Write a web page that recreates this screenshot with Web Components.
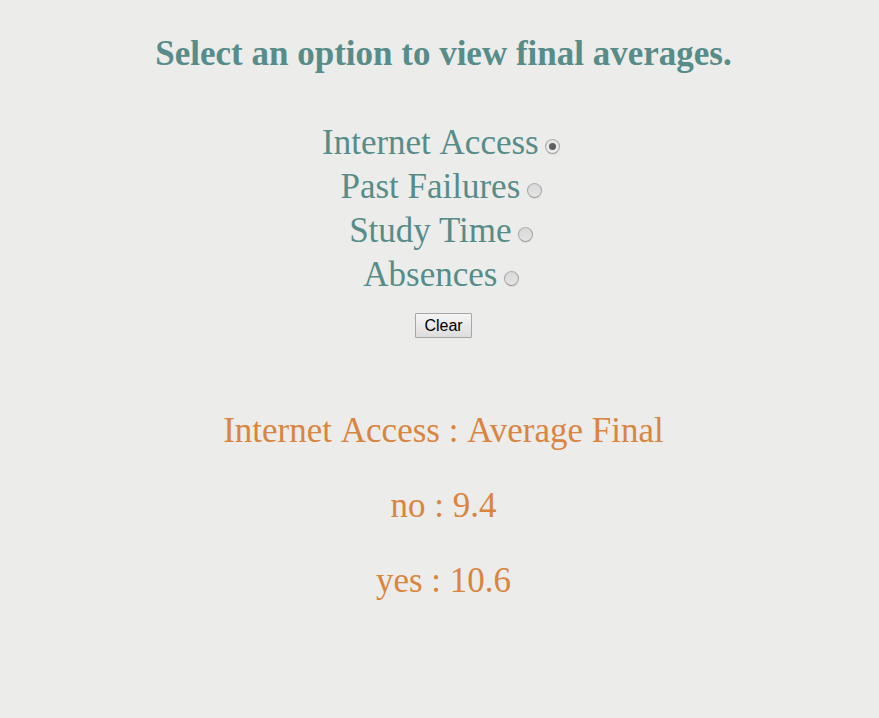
<!DOCTYPE html>
<html lang="en"><head><meta charset="utf-8"><title>Final averages</title>
<style>body{margin:0;background:#ececea;font-family:"Liberation Serif","Times New Roman",serif}</style></head>
<body><averages-page></averages-page>
<script>
customElements.define('option-row', class extends HTMLElement {
  constructor(){super();this.attachShadow({mode:'open'}).innerHTML=`
<style>:host{display:flex;justify-content:center;align-items:center;height:44px;box-sizing:border-box;padding-right:5px;font-size:35px;line-height:44px;white-space:pre}
i{box-sizing:border-box;width:15px;height:15px;margin:7px 0 0 6.3px;border:1px solid #a6a6a6;border-top-color:#b0b0b0;border-bottom-color:#999;border-radius:50%;background:linear-gradient(#d9d9d9,#e5e5e5);box-shadow:0 1px 1px #0001;display:grid;place-items:center}
:host([checked]) i{background:linear-gradient(#e4e4e4,#f0f0f0)}
:host([checked]) i::after{content:"";width:7px;height:7px;border-radius:50%;background:#606060}</style>
<span><slot></slot></span><i role="radio"></i>`}
});
customElements.define('clear-button', class extends HTMLElement {
  constructor(){super();this.attachShadow({mode:'open'}).innerHTML=`
<style>:host{display:block;width:57px;height:25px;margin:16px auto 0}
button{display:block;box-sizing:border-box;width:57px;height:25px;padding:0;border:1px solid #a6a6a6;border-radius:1px;background:linear-gradient(#f5f5f5,#dddddd);font:16px/23px "Liberation Sans",Arial,sans-serif;color:#000}</style>
<button><slot></slot></button>`}
});
customElements.define('result-line', class extends HTMLElement {
  constructor(){super();this.attachShadow({mode:'open'}).innerHTML=`
<style>:host{display:block;font-size:35px;line-height:41px;margin-bottom:34px;color:#d9853f}</style><slot></slot>`}
});
customElements.define('averages-page', class extends HTMLElement {
  constructor(){super();this.attachShadow({mode:'open'}).innerHTML=`
<style>:host{display:block;box-sizing:border-box;height:718px;padding:33px 0 0 8px;text-align:center;color:#578c89;overflow:hidden}
h1{margin:0 0 47px;font-size:35px;line-height:41px}
/* keeps the full word space before a capital A */
b{display:inline-block;font-weight:inherit}
section{margin-top:72px}</style>
<h1>Select an option to view final averages.</h1>
<option-row checked>Internet <b>Access</b></option-row><option-row>Past Failures</option-row><option-row>Study Time</option-row><option-row>Absences</option-row>
<clear-button>Clear</clear-button>
<section><result-line>Internet <b>Access</b> : <b>Average</b> Final</result-line><result-line>no : 9.4</result-line><result-line>yes : 10.6</result-line></section>`}
});
</script></body></html>
